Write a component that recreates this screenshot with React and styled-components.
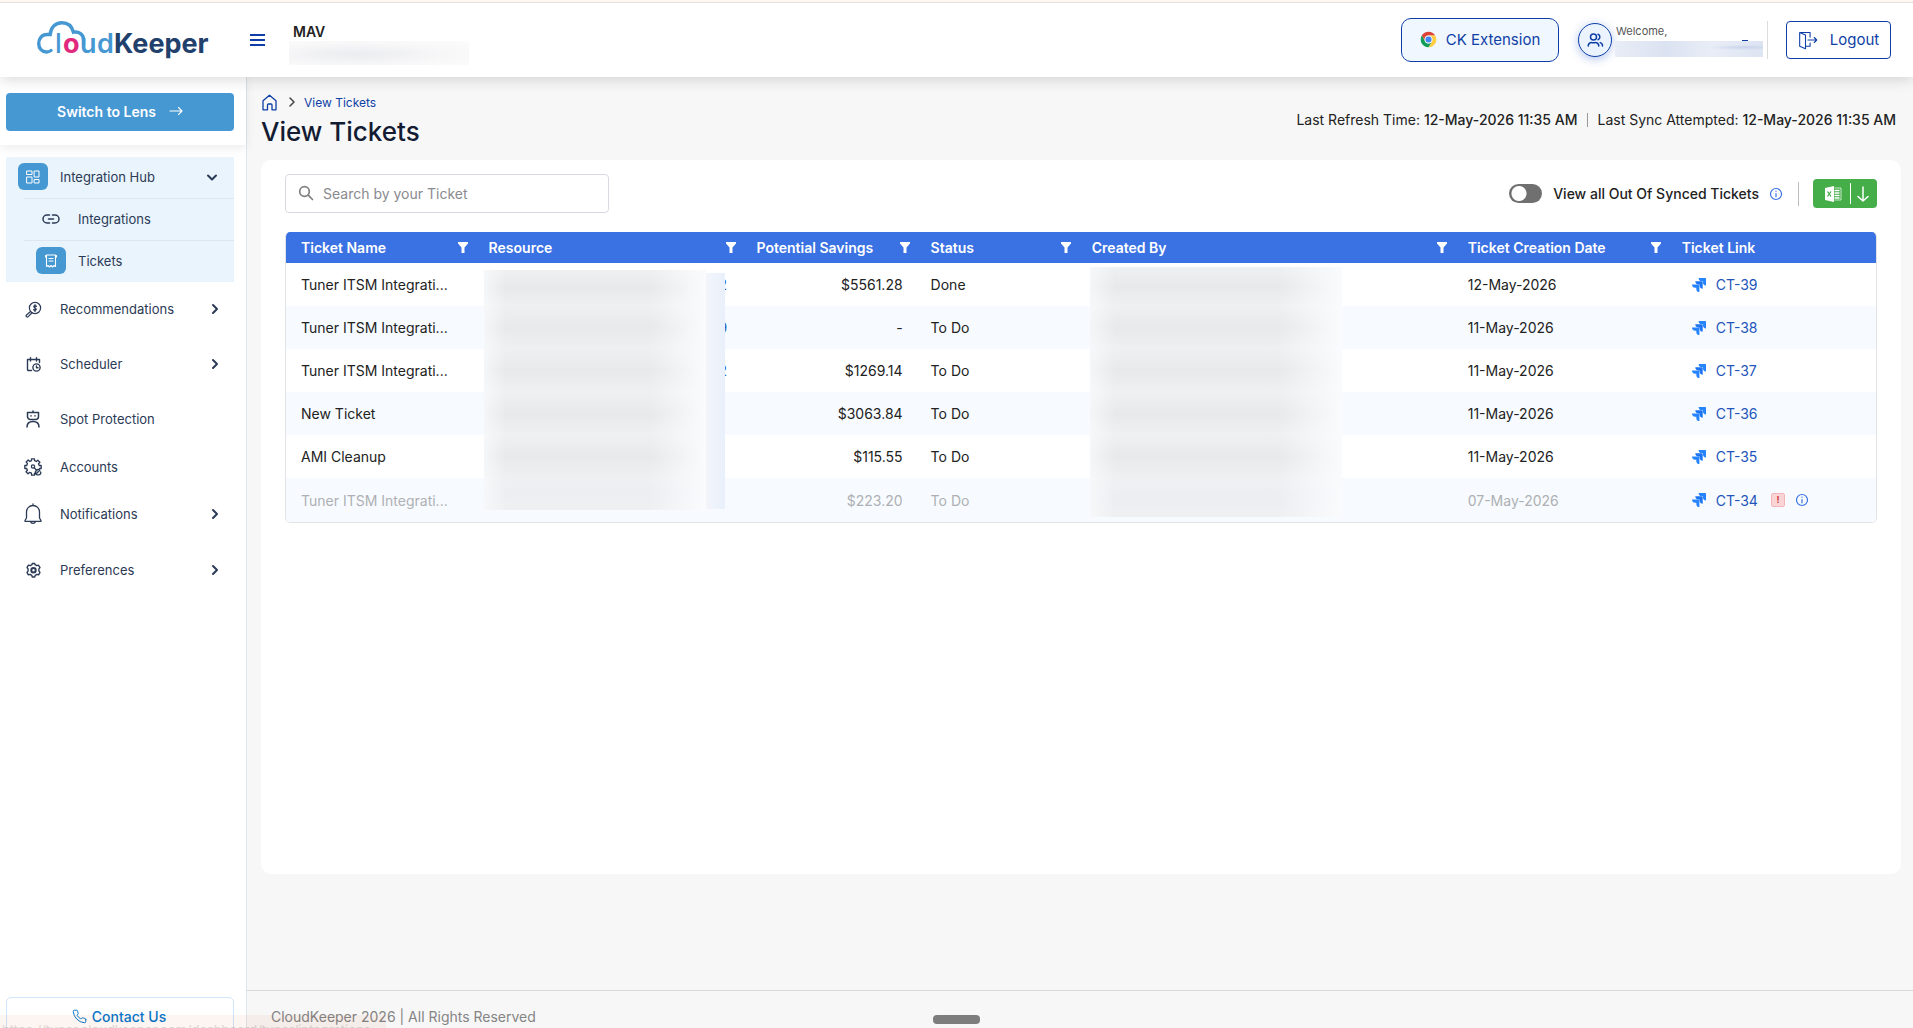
import { useState } from "react";
import styled, { createGlobalStyle } from "styled-components";

const tickets = [
	{ name: "Tuner ITSM Integrati...", tail: "2", savings: "$5561.28", status: "Done", date: "12-May-2026", link: "CT-39" },
	{ name: "Tuner ITSM Integrati...", tail: "9", savings: "-", status: "To Do", date: "11-May-2026", link: "CT-38" },
	{ name: "Tuner ITSM Integrati...", tail: "2", savings: "$1269.14", status: "To Do", date: "11-May-2026", link: "CT-37" },
	{ name: "New Ticket", tail: "", savings: "$3063.84", status: "To Do", date: "11-May-2026", link: "CT-36" },
	{ name: "AMI Cleanup", tail: "", savings: "$115.55", status: "To Do", date: "11-May-2026", link: "CT-35" },
	{ name: "Tuner ITSM Integrati...", tail: "1", savings: "$223.20", status: "To Do", date: "07-May-2026", link: "CT-34", outOfSync: true },
];

const columns = [
	{ title: "Ticket Name", width: "11.8%" },
	{ title: "Resource", width: "16.85%" },
	{ title: "Potential Savings", width: "10.95%" },
	{ title: "Status", width: "10.13%" },
	{ title: "Created By", width: "23.65%" },
	{ title: "Ticket Creation Date", width: "13.46%" },
	{ title: "Ticket Link", width: "auto", noFilter: true },
];

/* ---------- icons ---------- */

function Logo() {
	return (
		<svg width="174" height="40" viewBox="0 0 174 40" role="img" aria-label="CloudKeeper">
			<g fill="none" stroke="#4698d3" strokeWidth="3.4" strokeLinecap="round">
				<path d="M15 30.500C13.500 31.600 12 32 10.500 32C6 32 2.700 28.500 2.700 23.500C2.700 18.500 6 14.500 11 14.500H14.200C14.500 8 19 2.700 26 2.700C32 2.700 36 6.500 37.400 12.200C43 11.200 47.600 14.500 47.600 20V25" />
			</g>
			<g fontFamily="Inter, sans-serif" fontSize="27" fontWeight="600">
				<text x="19" y="33" fill="#4698d3" fontWeight="500">l</text>
				<text x="27" y="33" fill="#e0287d" fontWeight="700">o</text>
				<text x="44" y="33" fill="#4698d3">u</text>
				<text x="61" y="33" fill="#4698d3">d</text>
				<text x="78" y="33" fill="#22406c" fontWeight="700">Keeper</text>
			</g>
		</svg>
	);
}

const ChromeIcon = () => (
	<svg width="17" height="17" viewBox="0 0 48 48" aria-hidden="true">
		<path fill="#db4437" d="M4.950 13A22 22 0 0 1 43.050 13H24A11 11 0 0 0 14.470 29.500Z" />
		<path fill="#ffcd40" d="M43.050 13A22 22 0 0 1 24 46L33.530 29.500A11 11 0 0 0 24 13Z" />
		<path fill="#0f9d58" d="M24 46A22 22 0 0 1 4.950 13L14.470 29.500A11 11 0 0 0 33.530 29.500Z" />
		<circle cx="24" cy="24" r="11" fill="#f1f1f1" />
		<circle cx="24" cy="24" r="8.500" fill="#4285f4" />
	</svg>
);

const Stroke = ({ size = 18, box = 24, width = 1.5, children }) => (
	<svg
		width={size}
		height={size}
		viewBox={`0 0 ${box} ${box}`}
		fill="none"
		stroke="currentColor"
		strokeWidth={width}
		strokeLinecap="round"
		strokeLinejoin="round"
		aria-hidden="true"
	>
		{children}
	</svg>
);

const UsersIcon = () => (
	<Stroke size={18} width={2}>
		<circle cx="10" cy="8" r="4" />
		<path d="M3 20V19A5 5 0 0 1 8 15.500H12A5 5 0 0 1 17 19V20" />
		<path d="M16 4.300A4 4 0 0 1 16 11.700M19 15.500A4.500 4.500 0 0 1 22 20" />
	</Stroke>
);

const LogoutIcon = () => (
	<Stroke size={20} width={1.3}>
		<path d="M2 3V19.500L9 22.500V6L2 3H14.500V8.500M14.500 15.500V19.500H9" />
		<path d="M12 12H22.500M19.500 9L22.500 12L19.500 15" />
	</Stroke>
);

const HomeIcon = () => (
	<Stroke size={17} box={17} width={1.3}>
		<path d="M2 6.800L8.500 1.200L15 6.800V15.800H11V11A1 1 0 0 0 10 10H7.500A1 1 0 0 0 6.500 11V15.800H2Z" />
	</Stroke>
);

const GridIcon = () => (
	<Stroke size={16} box={16} width={1}>
		<rect x="2" y="2" width="5" height="3.500" />
		<rect x="2" y="8" width="5" height="6" />
		<rect x="9.500" y="2" width="4.500" height="6" />
		<rect x="9.500" y="10.500" width="4.500" height="3.500" />
	</Stroke>
);

const LinkIcon = () => (
	<Stroke size={18} box={18} width={1.5}>
		<path d="M7.500 5H5A4 4 0 0 0 5 13H7.500M10.500 5H13A4 4 0 0 1 13 13H10.500M6.500 9H11.500" />
	</Stroke>
);

const ReceiptIcon = () => (
	<Stroke size={16} box={16} width={1.1}>
		<path d="M3.500 2H12.500V13.500L11 12.500L9.500 14L8 12.500L6.500 14L5 12.500L3.500 13.500ZM2.500 4V2.500M13.500 4V2.500M6 5.500H10M6 8H10" />
	</Stroke>
);

const RecommendIcon = () => (
	<Stroke size={17} box={17} width={1.2}>
		<circle cx="10" cy="7" r="5.600" />
		<path d="M11.500 5.300C10.800 4.300 8.700 4.500 8.800 5.700C8.900 7 11.300 6.900 11.300 8.300C11.300 9.500 9.200 9.700 8.500 8.700M10 3.500V10.500" />
		<path d="M5.500 10.500L1.500 14A1.200 1.200 0 0 0 3.200 15.700L6.800 12" />
	</Stroke>
);

const SchedulerIcon = () => (
	<Stroke size={17} box={17} width={1.4}>
		<path d="M6.500 14.500H3.500A1 1 0 0 1 2.500 13.500V3.500H14.500V6.500M5.500 1.800V5M11.500 1.800V5" />
		<circle cx="11.500" cy="11.500" r="3.600" />
		<path d="M11.500 10V11.700H13" />
	</Stroke>
);

const RobotIcon = () => (
	<Stroke size={18} box={18} width={1.5}>
		<path d="M9 1V2.500M3.500 2.500H14.500V6.500A3 3 0 0 1 11.500 9.500H6.500A3 3 0 0 1 3.500 6.500ZM7 5.800V6M11 5.800V6M3 17C3 13.500 5.500 11.500 9 11.500C12.500 11.500 15 13.500 15 17" />
	</Stroke>
);

const AccountsIcon = () => (
	<Stroke size={20} box={20} width={1.3}>
		<path d="M13 17L11.500 16.200V18.200H8.500V16.200L6.500 15.400L5 16.800L3 14.800L4.400 13.200L3.700 11.500H1.800V8.500H3.700L4.500 6.600L3.200 5L5.200 3L6.800 4.400L8.500 3.700V1.800H11.500V3.700L13.300 4.500L14.800 3.200L16.900 5.200L15.500 6.800L16.200 8.500H18.200V11.500H16.500" />
		<circle cx="10" cy="9.500" r="1.600" />
		<path d="M11.200 10.700L14 13.500M13.200 16.800L16.800 13.200A2 2 0 0 0 13.600 13.200A2 2 0 0 0 16.500 17.500A1.600 1.600 0 0 0 17.500 15" />
	</Stroke>
);

const BellIcon = () => (
	<Stroke size={22} box={22} width={1.3}>
		<path d="M11 1V2.500M4.500 15V9A6.500 6.500 0 0 1 17.500 9V15L19 17.500V18.300H3V17.500ZM8.500 18.500A2.600 2.600 0 0 0 13.500 18.500" />
	</Stroke>
);

const GearIcon = () => (
	<Stroke size={17} box={17} width={1.4}>
		<path d="M7 2.700L7.300 1.500H9.700L10 2.700L11.800 3.700L13.400 3.200L15 5.600L13.900 6.900V9.100L15 10.400L13.600 12.800L12 12.300L10.200 13.400L9.700 15H7.300L6.800 13.400L5 12.300L3.400 12.800L2 10.400L3.100 9.100V6.900L2 5.600L3.400 3.200L5.200 3.700Z" />
		<circle cx="8.500" cy="8.200" r="2.200" strokeWidth="2" />
	</Stroke>
);

const Chevron = ({ down }) => (
	<Stroke size={12} box={12} width={2}>
		{down ? <path d="M2 4.500L6 8.500L10 4.500" /> : <path d="M4 2L8 6L4 10" />}
	</Stroke>
);

const PhoneIcon = () => (
	<Stroke size={15} box={24} width={1.6}>
		<path d="M22 17v3a2 2 0 0 1-2.200 2A19.800 19.800 0 0 1 2 4.200 2 2 0 0 1 4 2h3a2 2 0 0 1 2 1.700c.1 1 .4 1.900.7 2.800a2 2 0 0 1-.5 2.100L8 9.900a16 16 0 0 0 6 6l1.300-1.300a2 2 0 0 1 2.100-.4c.9.300 1.800.6 2.800.7A2 2 0 0 1 22 17z" />
	</Stroke>
);

const SearchIcon = () => (
	<Stroke size={16} box={16} width={1.7}>
		<circle cx="6.500" cy="6.500" r="4.800" />
		<path d="M10.200 10.200L14.500 14.500" />
	</Stroke>
);

const FunnelIcon = () => (
	<svg width="10" height="11" viewBox="0 0 10 11" fill="#fff" aria-hidden="true">
		<path d="M0 0H10V1.500L6.500 5.500V11H3.500V5.500L0 1.500Z" />
	</svg>
);

const InfoIcon = () => (
	<Stroke size={14} box={14} width={1.2}>
		<circle cx="7" cy="7" r="5.500" />
		<path d="M7 6.500V9.800M7 4.200V4.300" />
	</Stroke>
);

const jiraArrow = "M13.400 0H6.600A3.100 3.100 0 0 0 9.700 3.100H10.900V4.300A3.100 3.100 0 0 0 14 7.400V.6A.6.6 0 0 0 13.400 0Z";

const JiraIcon = () => (
	<svg width="14" height="14" viewBox="0 0 14 14" aria-hidden="true">
		<path fill="#2684ff" d={jiraArrow} />
		<path fill="#1d74f2" d={jiraArrow} transform="translate(-3.300 3.300)" />
		<path fill="#2684ff" d={jiraArrow} transform="translate(-6.600 6.600)" />
	</svg>
);

const ExcelIcon = () => (
	<svg width="17" height="16" viewBox="0 0 17 16" aria-hidden="true">
		<path d="M0 2L9 0V16L0 14Z" fill="#fff" />
		<path d="M9.500 2H16V14H9.500" fill="none" stroke="#fff" strokeWidth="1" opacity="0.700" />
		<path d="M9.500 4.500H14.500M9.500 7H14.500M9.500 9.500H14.500M9.500 12H14.500" stroke="#fff" strokeWidth="1.400" />
		<path d="M2.500 5.500L6 10.500M6 5.500L2.500 10.500" stroke="#45ae49" strokeWidth="1.300" />
	</svg>
);

const DownArrow = () => (
	<Stroke size={16} box={16} width={1.5}>
		<path d="M8 1V15M3 10.500L8 15L13 10.500" />
	</Stroke>
);

const menu = [
	{ label: "Recommendations", icon: <RecommendIcon />, height: 56, more: true },
	{ label: "Scheduler", icon: <SchedulerIcon />, height: 54, more: true },
	{ label: "Spot Protection", icon: <RobotIcon />, height: 56 },
	{ label: "Accounts", icon: <AccountsIcon />, height: 40 },
	{ label: "Notifications", icon: <BellIcon />, height: 54, more: true },
	{ label: "Preferences", icon: <GearIcon />, height: 58, more: true },
];

function Header() {
	return (
		<TopBar>
			<LogoLink href="#"><Logo /></LogoLink>
			<Burger aria-label="Toggle menu"><i /><i /><i /></Burger>
			<Account>
				<AccountName>MAV</AccountName>
				<AccountSmudge />
			</Account>
			<ExtensionButton>
				<ChromeIcon />
				CK Extension
			</ExtensionButton>
			<Avatar aria-label="Profile"><UsersIcon /></Avatar>
			<UserBox>
				<Welcome>Welcome,</Welcome>
				<UserSmudge />
			</UserBox>
			<LogoutButton>
				<LogoutIcon />
				Logout
			</LogoutButton>
		</TopBar>
	);
}

function Sidebar() {
	return (
		<Side>
			<SwitchWrap>
				<SwitchButton>
					Switch to Lens
					<Stroke size={14} box={14} width={1.1}>
						<path d="M1 7H13M9.500 3.500L13 7L9.500 10.500" />
					</Stroke>
				</SwitchButton>
			</SwitchWrap>
			<nav>
				<OpenGroup>
					<GroupItem>
						<IconTile><GridIcon /></IconTile>
						<ItemLabel>Integration Hub</ItemLabel>
						<Chevron down />
					</GroupItem>
					<SubItem href="#">
						<SubIcon><LinkIcon /></SubIcon>
						Integrations
					</SubItem>
					<SubItem href="#">
						<IconTile><ReceiptIcon /></IconTile>
						Tickets
					</SubItem>
				</OpenGroup>
				{menu.map((item) => (
					<MenuItem key={item.label} $height={item.height}>
						<SubIcon>{item.icon}</SubIcon>
						<ItemLabel>{item.label}</ItemLabel>
						{item.more && <Chevron />}
					</MenuItem>
				))}
			</nav>
			<ContactButton>
				<PhoneIcon />
				Contact Us
			</ContactButton>
		</Side>
	);
}

function TicketRow({ ticket, first, last }) {
	return (
		<Row $muted={ticket.outOfSync}>
			<td>{ticket.name}</td>
			<SmudgeCell>
				<SmudgeLine>
					<Smudge $width={222} $top={first ? 7 : 0} $bottom={last ? 11 : 0} $soft={last} />
					<TailSmudge $top={first ? 10 : 0} $bottom={last ? 12 : 0} />
					{ticket.tail && <Tail href="#">{ticket.tail}</Tail>}
				</SmudgeLine>
			</SmudgeCell>
			<AmountCell>{ticket.savings}</AmountCell>
			<td>{ticket.status}</td>
			<SmudgeCell>
				<SmudgeLine $wide>
					<Smudge $width={252} $top={first ? 4 : 0} $bottom={last ? 4 : 0} $soft={last} />
				</SmudgeLine>
			</SmudgeCell>
			<td>{ticket.date}</td>
			<td>
				<LinkLine>
					<JiraIcon />
					<TicketLink href="#">{ticket.link}</TicketLink>
					{ticket.outOfSync && (
						<>
							<AlertBadge>!</AlertBadge>
							<InfoIcon />
						</>
					)}
				</LinkLine>
			</td>
		</Row>
	);
}

function App() {
	const [search, setSearch] = useState("");
	const [showAll, setShowAll] = useState(false);

	return (
		<Page>
			<GlobalStyle />
			<Header />
			<Body>
				<Sidebar />
				<Main>
					<TitleBar>
						<div>
							<Breadcrumb>
								<a href="#" aria-label="Home"><HomeIcon /></a>
								<CrumbArrow><Chevron /></CrumbArrow>
								<a href="#">View Tickets</a>
							</Breadcrumb>
							<Title>View Tickets</Title>
						</div>
						<SyncInfo>
							<span>Last Refresh Time: <b>12-May-2026 11:35 AM</b></span>
							<span>Last Sync Attempted: <b>12-May-2026 11:35 AM</b></span>
						</SyncInfo>
					</TitleBar>

					<Card>
						<Toolbar>
							<SearchBox>
								<SearchIcon />
								<SearchInput
									aria-label="Search by your Ticket"
									placeholder="Search by your Ticket"
									value={search}
									onChange={(e) => setSearch(e.target.value)}
								/>
							</SearchBox>
							<ToggleLabel>
								<Toggle type="checkbox" checked={showAll} onChange={() => setShowAll(!showAll)} />
								View all Out Of Synced Tickets
							</ToggleLabel>
							<InfoWrap><InfoIcon /></InfoWrap>
							<Divider />
							<ExportButton aria-label="Export to Excel">
								<ExcelIcon />
								<ExportLine />
								<DownArrow />
							</ExportButton>
						</Toolbar>

						<TableFrame>
							<Table>
								<colgroup>
									{columns.map((c) => <Col key={c.title} $width={c.width} />)}
								</colgroup>
								<thead>
									<tr>
										{columns.map((c) => (
											<th key={c.title}>
												<HeadLine>
													{c.title}
													{!c.noFilter && (
														<FilterButton aria-label={`Filter ${c.title}`}><FunnelIcon /></FilterButton>
													)}
												</HeadLine>
											</th>
										))}
									</tr>
								</thead>
								<tbody>
									{tickets.map((t, i) => (
										<TicketRow key={t.link} ticket={t} first={i === 0} last={i === tickets.length - 1} />
									))}
								</tbody>
							</Table>
						</TableFrame>
					</Card>
					<Footer>CloudKeeper 2026 | All Rights Reserved</Footer>
				</Main>
			</Body>
			<Handle />
			<StatusBubble>https://tuner.cloudkeeper.com/dashboard/tuner/integrations</StatusBubble>
		</Page>
	);
}

export default App;

const GlobalStyle = createGlobalStyle`
	* {
		box-sizing: border-box;
	}
	body {
		margin: 0;
		font-family: Inter, "Liberation Sans", sans-serif;
		font-size: 14px;
		color: #222;
		background: #f7f7f7;
		overflow: hidden;
	}
	button, input {
		font-family: inherit;
		margin: 0;
		padding: 0;
	}
	button {
		cursor: pointer;
		border: none;
		background: none;
	}
	a {
		text-decoration: none;
		color: inherit;
	}
`;

const Page = styled.div`
	display: flex;
	flex-direction: column;
	height: 100vh;
`;

const TopBar = styled.header`
	position: relative;
	z-index: 2;
	display: flex;
	align-items: center;
	height: 77px;
	flex-shrink: 0;
	padding: 2px 22px 0 36px;
	background: linear-gradient(#fff8f2 2px, #eae0da 2px, #eae0da 3px, #fff 3px);
	box-shadow: 0 2px 14px rgba(0, 0, 0, 0.16);
`;

const LogoLink = styled.a`
	display: flex;
	width: 214px;
`;

const Burger = styled.button`
	display: flex;
	flex-direction: column;
	gap: 3px;
	width: 15px;
	i {
		height: 2px;
		background: #0f3fa6;
	}
`;

const Account = styled.div`
	display: flex;
	flex-direction: column;
	margin: 0 auto 0 24px;
	padding-top: 8px;
`;

const AccountName = styled.strong`
	padding-left: 4px;
	font-size: 14px;
	line-height: 18px;
	font-weight: 600;
`;

const AccountSmudge = styled.div`
	width: 180px;
	height: 24px;
	background: radial-gradient(ellipse at 38% 55%, #ebecef, #f8f8f9 60%, #fcfcfc);
`;

const ExtensionButton = styled.button`
	display: flex;
	align-items: center;
	justify-content: center;
	gap: 9px;
	width: 158px;
	height: 44px;
	border: 1px solid #0f3fa6;
	border-radius: 10px;
	background: #f0f7ff;
	color: #0f3fa6;
	font-size: 15px;
	font-weight: 400;
`;

const Avatar = styled.button`
	display: flex;
	align-items: center;
	justify-content: center;
	width: 34px;
	height: 34px;
	margin-left: 19px;
	border: 1px solid #0f3fa6;
	border-radius: 50%;
	background: #eaf3fe;
	color: #0f3fa6;
	box-shadow: 0 2px 10px rgba(30, 80, 200, 0.35);
`;

const UserBox = styled.div`
	width: 156px;
	height: 38px;
	padding: 1px 0 0 3px;
	border-right: 1px solid #dcdcdc;
`;

const Welcome = styled.div`
	padding-left: 1px;
	font-size: 11px;
	line-height: 19px;
	color: #555;
`;

const UserSmudge = styled.div`
	position: relative;
	width: 148px;
	height: 16px;
	background: radial-gradient(ellipse at 88% 40%, #c9d4ea, rgba(201, 212, 234, 0) 20%), linear-gradient(90deg, #e8ecf6, #dbe2f1 35%, #e9edf7 65%, #dde4f2);
	&::before {
		content: "";
		position: absolute;
		top: -1px;
		right: 15px;
		width: 6px;
		height: 1px;
		background: #0f3fa6;
	}
`;

const LogoutButton = styled.button`
	display: flex;
	align-items: center;
	justify-content: center;
	gap: 12px;
	width: 105px;
	height: 38px;
	margin-left: 18px;
	border: 1px solid #0f3fa6;
	border-radius: 4px;
	background: #fff;
	color: #0f3fa6;
	font-size: 15px;
	font-weight: 400;
`;

const Body = styled.div`
	display: flex;
	flex: 1;
	min-height: 0;
`;

const Side = styled.aside`
	display: flex;
	flex-direction: column;
	width: 247px;
	flex-shrink: 0;
	background: #fff;
	border-right: 1px solid #dfe6ee;

	nav {
		flex: 1;
		padding: 12px 12px 0 6px;
	}
`;

const SwitchWrap = styled.div`
	padding: 16px 12px 14px 6px;
	box-shadow: 0 3px 10px rgba(0, 0, 0, 0.08);
`;

const SwitchButton = styled.button`
	display: flex;
	align-items: center;
	justify-content: center;
	gap: 13px;
	width: 100%;
	height: 38px;
	padding-bottom: 2px;
	border-radius: 4px;
	background: #4698d3;
	color: #fff;
	font-size: 14px;
	font-weight: 600;
`;

const OpenGroup = styled.div`
	background: #eaf4fc;
	color: #2b3a55;
`;

const GroupItem = styled.button`
	display: flex;
	align-items: center;
	width: 100%;
	height: 41px;
	padding: 0 16px 2px 12px;
	color: #2b3a55;
	font-size: 13px;
`;

const ItemLabel = styled.span`
	flex: 1;
	text-align: left;
`;

const SubItem = styled.a`
	display: flex;
	align-items: center;
	height: 42px;
	margin-left: 18px;
	padding: 0 0 2px 12px;
	border-top: 1px solid #dde5f0;
	font-size: 13px;
`;

const IconTile = styled.span`
	display: flex;
	align-items: center;
	justify-content: center;
	width: 30px;
	height: 27px;
	margin-right: 12px;
	border-radius: 6px;
	background: #4698d3;
	color: #fff;
`;

const SubIcon = styled.span`
	display: flex;
	align-items: center;
	justify-content: center;
	width: 30px;
	margin-right: 12px;
`;

const MenuItem = styled.button`
	display: flex;
	align-items: center;
	width: 100%;
	height: ${(p) => p.$height}px;
	padding: 0 13px 2px 12px;
	color: #2b3a55;
	font-size: 13px;
`;

const ContactButton = styled.button`
	display: flex;
	align-items: center;
	justify-content: center;
	gap: 5px;
	height: 40px;
	flex-shrink: 0;
	margin: 0 12px -9px 6px;
	padding: 0 2px 2px 0;
	border: 1px solid #cfe6fb;
	border-radius: 5px;
	background: #fff;
	color: #0b77cc;
	font-size: 14px;
	font-weight: 500;
`;

const Main = styled.main`
	display: flex;
	flex-direction: column;
	flex: 1;
	min-width: 0;
`;

const TitleBar = styled.div`
	display: flex;
	align-items: flex-start;
	justify-content: space-between;
	height: 83px;
	padding: 16px 17px 0 14px;
`;

const Breadcrumb = styled.div`
	display: flex;
	align-items: center;
	height: 18px;
	font-size: 12px;
	color: #0f3fa6;
	a {
		display: flex;
	}
`;

const CrumbArrow = styled.span`
	display: flex;
	margin: 0 6px 0 8px;
	color: #444;
	svg {
		stroke-width: 1.5;
	}
`;

const Title = styled.h1`
	margin: 4px 0 0;
	font-size: 26px;
	line-height: 34px;
	font-weight: 500;
	color: #131c33;
`;

const SyncInfo = styled.div`
	display: flex;
	margin-top: 18px;
	line-height: 18px;
	b {
		font-weight: 500;
	}
	span + span {
		margin-left: 10px;
		padding-left: 10px;
		background: linear-gradient(#999, #999) no-repeat left center / 1px 14px;
	}
`;

const Card = styled.section`
	flex: 1;
	margin: 0 12px 116px 14px;
	padding: 14px 24px 0 24px;
	border-radius: 10px;
	background: #fff;
`;

const Toolbar = styled.div`
	display: flex;
	align-items: center;
	margin-bottom: 19px;
`;

const SearchBox = styled.div`
	display: flex;
	align-items: center;
	gap: 9px;
	width: 324px;
	height: 39px;
	margin-right: auto;
	padding: 0 12px 1px;
	border: 1px solid #d9d9e3;
	border-radius: 4px;
	color: #808080;
`;

const SearchInput = styled.input`
	flex: 1;
	border: none;
	outline: none;
	font-size: 14px;
	&::placeholder {
		color: #8a8a8f;
	}
`;

const ToggleLabel = styled.label`
	display: flex;
	align-items: center;
	gap: 11px;
	font-weight: 500;
`;

const Toggle = styled.input`
	appearance: none;
	width: 33px;
	height: 19px;
	margin: 0;
	border-radius: 10px;
	background: radial-gradient(circle at 10px 50%, #fff 7px, #707070 8px);
	&:checked {
		background: radial-gradient(circle at 23px 50%, #fff 7px, #3a71e3 8px);
	}
`;

const InfoWrap = styled.span`
	display: flex;
	margin: 0 15px 0 10px;
	color: #3a71e3;
`;

const Divider = styled.i`
	width: 1px;
	height: 24px;
	background: #bdbdbd;
`;

const ExportButton = styled.button`
	display: flex;
	align-items: center;
	justify-content: center;
	gap: 4px;
	width: 64px;
	height: 29px;
	margin-left: 14px;
	padding-left: 5px;
	border-radius: 4px;
	background: #45ae49;
	color: #fff;
`;

const ExportLine = styled.i`
	width: 1px;
	height: 21px;
	margin-left: 4px;
	background: #fff;
`;

const TableFrame = styled.div`
	border: 1px solid #e2e3e6;
	border-top: none;
	border-radius: 5px;
	overflow: hidden;
`;

const Col = styled.col`
	width: ${(p) => p.$width};
`;

const Table = styled.table`
	width: 100%;
	table-layout: fixed;
	border-collapse: collapse;

	th {
		height: 31px;
		padding: 0 6px 0 15px;
		background: #3a71e3;
		color: #fff;
		font-weight: 600;
		text-align: left;
	}
	td {
		height: 43px;
		padding: 0 13px 0 15px;
		white-space: nowrap;
	}
	tr:last-child td {
		height: 44px;
	}
`;

const HeadLine = styled.div`
	display: flex;
	align-items: center;
	justify-content: space-between;
`;

const FilterButton = styled.button`
	display: flex;
`;

const Row = styled.tr`
	color: ${(p) => (p.$muted ? "#aeb0b3" : "#222")};
	&:nth-child(even) {
		background: #f7fbff;
	}
`;

const AmountCell = styled.td`
	text-align: right;
`;

const SmudgeCell = styled.td`
	&& {
		padding: 0 0 0 10px;
		vertical-align: top;
	}
`;

const SmudgeLine = styled.div`
	display: flex;
	height: 43px;
	margin-left: ${(p) => (p.$wide ? "3px" : "0")};
`;

const Smudge = styled.div`
	width: ${(p) => p.$width}px;
	margin: ${(p) => p.$top}px 0 ${(p) => p.$bottom}px;
	background:
		linear-gradient(90deg, rgba(250, 251, 252, 0.7), rgba(250, 251, 252, 0) 10%, rgba(250, 251, 252, 0) 75%, #fafbfd),
		linear-gradient(#eff0f2, ${(p) => (p.$soft ? "#eceef1" : "#e8e9eb")} 50%, #eff0f2);
`;

const TailSmudge = styled.div`
	position: relative;
	z-index: 1;
	width: 19px;
	margin: ${(p) => p.$top}px 0 ${(p) => p.$bottom}px;
	background: linear-gradient(90deg, #f3f5fb, #e9f0fb);
`;

const Tail = styled.a`
	margin-left: -6px;
	line-height: 43px;
	color: #2a5bc0;
`;

const LinkLine = styled.div`
	display: flex;
	align-items: center;
	padding-left: 10px;
	color: #3a71e3;
`;

const TicketLink = styled.a`
	margin: 0 13px 0 10px;
	color: #2455bb;
`;

const AlertBadge = styled.span`
	width: 14px;
	height: 14px;
	margin-right: 10px;
	border: 1px solid #f3b6b8;
	border-radius: 2px;
	background: #fbd5d6;
	color: #c8353a;
	font-size: 9px;
	line-height: 12px;
	font-weight: 700;
	text-align: center;
`;

const Footer = styled.footer`
	height: 38px;
	flex-shrink: 0;
	padding: 16px 24px 0;
	border-top: 1px solid #d9d9d9;
	line-height: 20px;
	color: #858585;
`;

/* floats over the page, bottom centre */
const Handle = styled.div`
	position: fixed;
	bottom: 4px;
	left: 50%;
	width: 47px;
	height: 9px;
	margin-left: -24px;
	border-radius: 4px;
	background: #7d7d7d;
`;

const StatusBubble = styled.div`
	position: fixed;
	left: 0;
	bottom: 0;
	width: 386px;
	height: 13px;
	padding: 8px 0 0 2px;
	background: #fdf5f1;
	color: #dcd4d2;
	mix-blend-mode: multiply;
	font-size: 13px;
	line-height: 14px;
	white-space: nowrap;
	overflow: hidden;
`;
